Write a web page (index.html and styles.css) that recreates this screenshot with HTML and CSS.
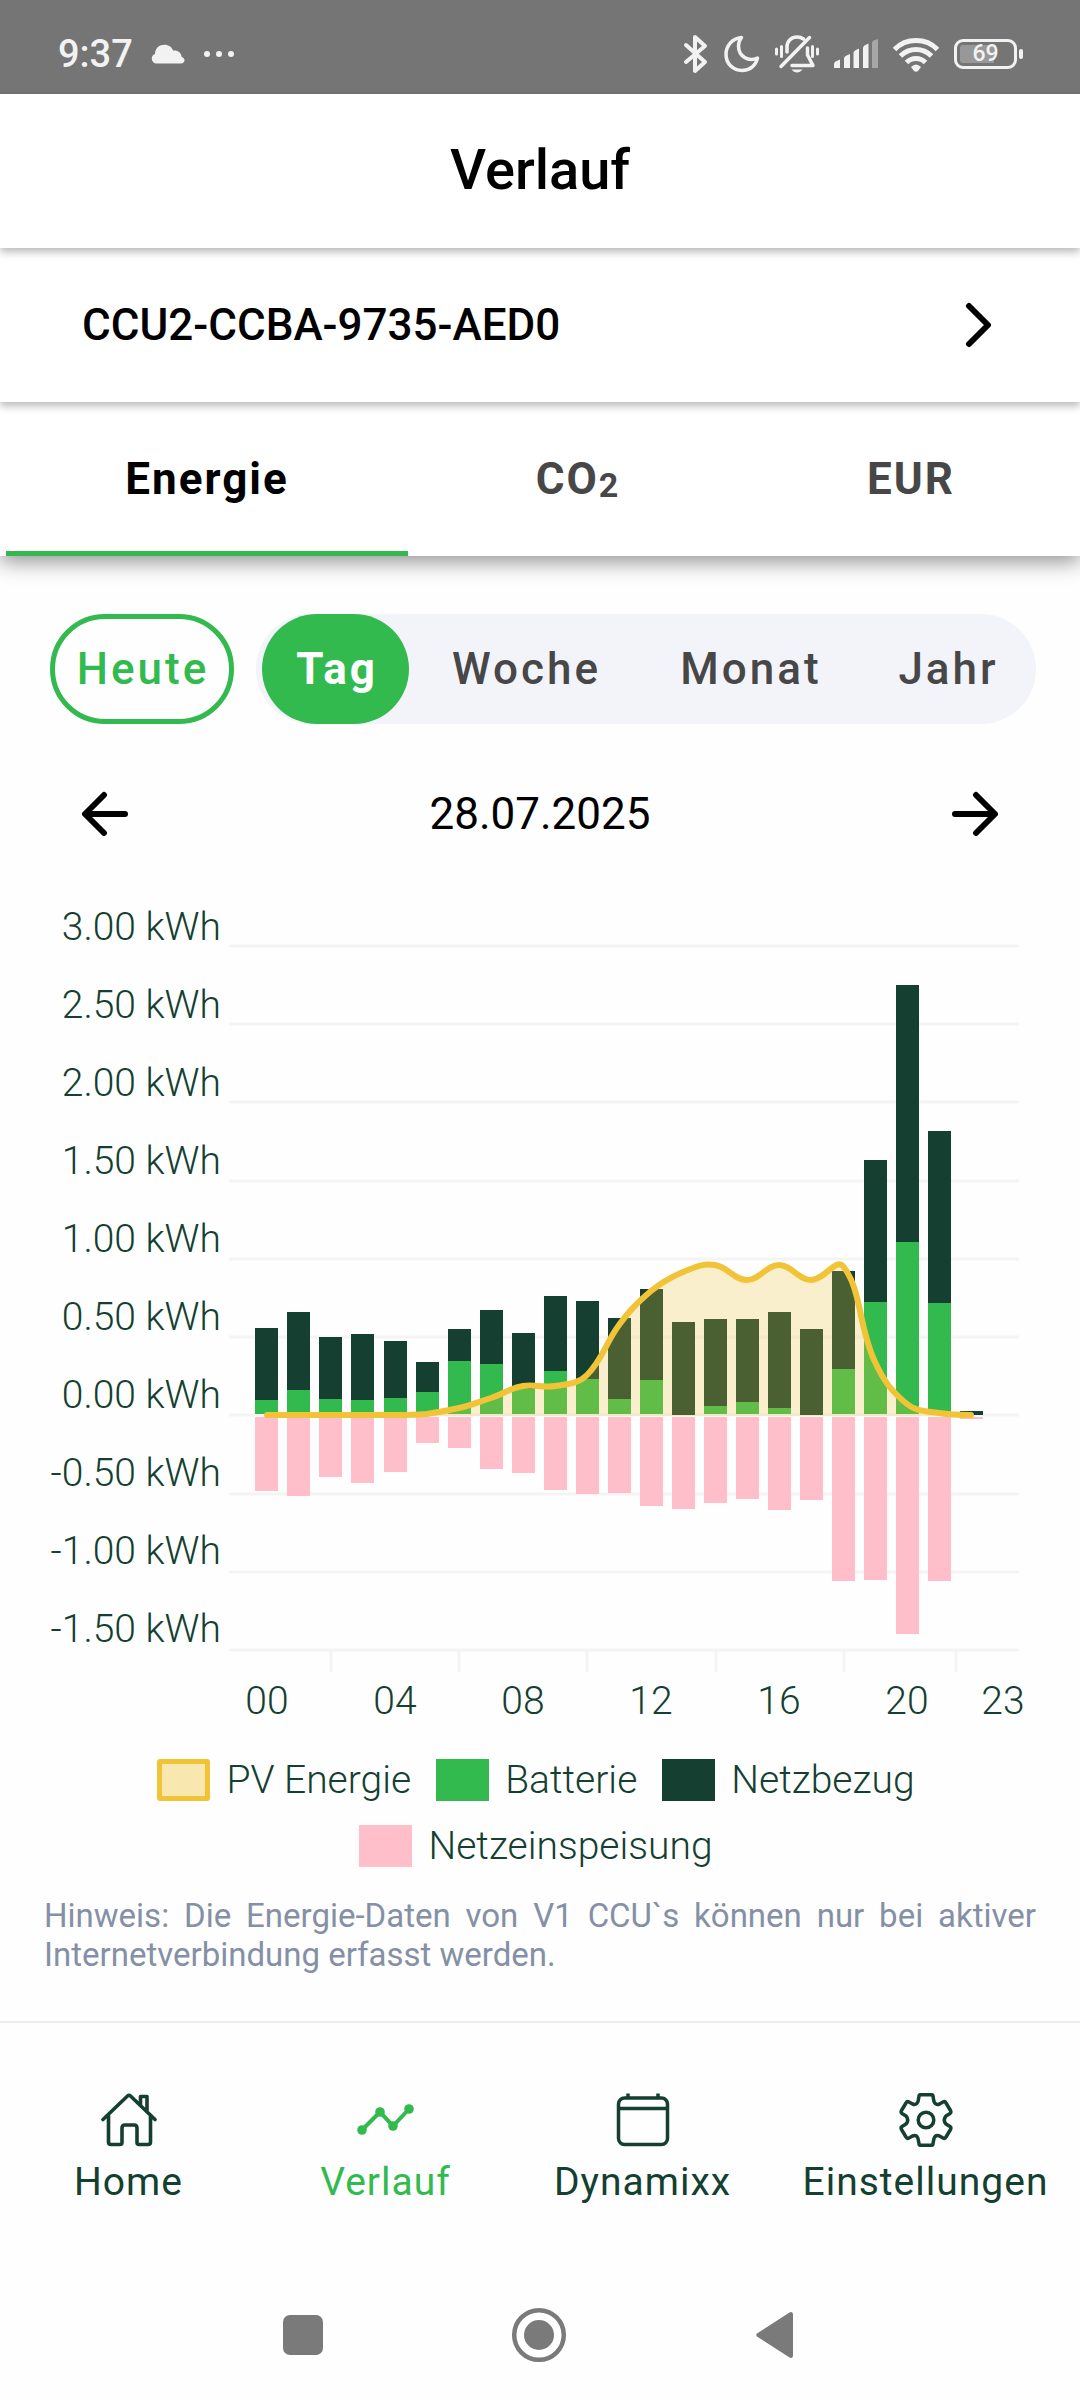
FILE: index.html
```html
<!DOCTYPE html>
<html lang="de">
<head>
<meta charset="utf-8">
<meta name="viewport" content="width=device-width, initial-scale=1">
<title>Verlauf</title>
<link rel="stylesheet" href="styles.css">
</head>
<body>
<div class="status">
  <div class="status-left">
    <span class="clock">9:37</span>
    <svg class="cloud" width="34" height="20" viewBox="0 0 34 20" fill="currentColor"><path d="M5 19.500a5 5 0 0 1-1-9.600C4 4 8.500.800 13.500.800c4 0 7.200 2.200 8.500 5.700 5-.5 8.200 2.200 8.700 6.500 1.800.5 2.800 1.800 2.800 3.300 0 1.900-1.500 3.200-3.500 3.200z"/></svg>
    <svg class="dots" width="32" height="8" viewBox="0 0 32 8" fill="currentColor"><circle cx="4" cy="4" r="3"/><circle cx="16" cy="4" r="3"/><circle cx="28" cy="4" r="3"/></svg>
  </div>
  <div class="status-right">
    <svg width="26" height="40" viewBox="0 0 26 40" fill="none" stroke="currentColor" stroke-width="4" stroke-linecap="round" stroke-linejoin="round"><path d="M3 11l19 17-10 9V3l10 9L3 28"/></svg>
    <svg width="36" height="38" viewBox="0 0 36 38" fill="none" stroke="currentColor" stroke-width="3.500" stroke-linejoin="round"><path d="M17.500 2.500C8 3.500 2 11 2 19.500 2 29 9.500 35.500 18 35.500c7.500 0 14-5 15.500-12.500-9 4-19-1.500-19-12 0-3.500 1-6 3-8.500z"/></svg>
    <svg width="44" height="38" viewBox="0 0 44 38" fill="none" stroke="currentColor" stroke-width="3.500" stroke-linecap="round" stroke-linejoin="round"><path d="M12 17v-5C12 6 16.500 2 22 2c2.500 0 4.500.500 6.500 2M32.500 13v7l5.500 10.500H17M34.500 2.500L6 31.500"/><path stroke-width="3" d="M1.500 14v5M6.500 11.500v10M37.500 11.500v10M42.500 14v5"/><path d="M16.500 34.500h11c-1.500 2-3.500 3-5.500 3s-4-1-5.500-3z" fill="currentColor" stroke="none"/></svg>
    <svg width="44" height="30" viewBox="0 0 44 30" fill="currentColor"><path d="M0 25q0-1.500 1.500-2.500L6 20.500V29H0zM10 19.500q0-1.500 1.500-2.500L16 15v14h-6zM19.500 14q0-1.500 1.500-2.500l4-2V29h-5.500zM29 9q0-1.500 1.500-2.500L34.500 4.500V29H29z"/><path opacity=".4" d="M38 4q0-1.500 1.500-2.500L44 0v29h-6z"/></svg>
    <svg width="46" height="35" viewBox="0 0 46 35" fill="none" stroke="currentColor" stroke-width="5"><path d="M1.500 12.500Q10 3.500 23 3.500t21.500 9M7.500 19Q14 12.500 23 12.500T38.500 19M13.500 25.500q4-4 9.500-4t9.500 4"/><path fill="currentColor" stroke="none" d="M18 30q5-5 10 0l-3 4q-2 1.500-4 0z"/></svg>
    <span class="battery"><span class="battery-level">69</span></span>
  </div>
</div>

<header class="title-bar"><h1>Verlauf</h1></header>

<button class="device" type="button">
  <span>CCU2-CCBA-9735-AED0</span>
  <svg width="28" height="46" viewBox="0 0 28 46" fill="none" stroke="currentColor" stroke-width="6" stroke-linecap="round" stroke-linejoin="round"><path d="M5 4l19 19L5 42"/></svg>
</button>

<nav class="unit-tabs">
  <button class="unit-tab active" type="button">Energie</button>
  <button class="unit-tab" type="button">CO<span class="sub">2</span></button>
  <button class="unit-tab" type="button">EUR</button>
</nav>

<main class="content">
  <div class="range">
    <button class="today" type="button">Heute</button>
    <div class="range-group">
      <button class="range-item active" type="button">Tag</button>
      <button class="range-item" type="button">Woche</button>
      <button class="range-item" type="button">Monat</button>
      <button class="range-item" type="button">Jahr</button>
    </div>
  </div>

  <div class="date-row">
    <button class="arrow" type="button" aria-label="Vorheriger Tag"><svg width="46" height="46" viewBox="0 0 46 46" fill="none" stroke="currentColor" stroke-width="6" stroke-linecap="round" stroke-linejoin="round"><path d="M22 4L3 23l19 19M4 23h39"/></svg></button>
    <span class="date">28.07.2025</span>
    <button class="arrow" type="button" aria-label="Nächster Tag"><svg width="46" height="46" viewBox="0 0 46 46" fill="none" stroke="currentColor" stroke-width="6" stroke-linecap="round" stroke-linejoin="round"><path d="M24 4l19 19-19 19M42 23H3"/></svg></button>
  </div>

  <!-- y = 0 is the 0 kWh line, 0.5 kWh is 78 units -->
  <svg class="chart" viewBox="0 -515 1080 830" role="img" aria-label="Energie pro Stunde">
    <path class="grid" d="M229-469h790M229-391h790M229-313h790M229-234h790M229-156h790M229-78h790M229 0h790M229 79h790M229 157h790M229 235h790M331 235v22M459 235v22M587 235v22M716 235v22M844 235v22M956 235v22"/>
    <g class="axis-y">
      <text x="221" y="-475">3.00 kWh</text><text x="221" y="-397">2.50 kWh</text><text x="221" y="-319">2.00 kWh</text><text x="221" y="-241">1.50 kWh</text><text x="221" y="-163">1.00 kWh</text><text x="221" y="-85">0.50 kWh</text><text x="221" y="-7">0.00 kWh</text><text x="221" y="71">-0.50 kWh</text><text x="221" y="149">-1.00 kWh</text><text x="221" y="227">-1.50 kWh</text>
    </g>
    <g class="axis-x">
      <text x="267" y="299">00</text><text x="395" y="299">04</text><text x="523" y="299">08</text><text x="651" y="299">12</text><text x="779" y="299">16</text><text x="907" y="299">20</text><text x="1003" y="299">23</text>
    </g>
    <path class="grid-draw" d="M255-87h23V-1h-23zM287-103h23V-1h-23zM319-78h23V-1h-23zM351-81h23V-1h-23zM384-74h23V-1h-23zM416-53h23V-1h-23zM448-86h23V-1h-23zM480-105h23V-1h-23zM512-82h23V-1h-23zM544-119h23V-1h-23zM576-114h23V-1h-23zM608-97h23V-1h-23zM640-126h23V-1h-23zM672-93h23V0h-23zM704-96h23V-1h-23zM736-96h23V-1h-23zM768-103h23V-1h-23zM800-86h23V0h-23zM832-144h23V-1h-23zM864-255h23V-1h-23zM896-430h23V-1h-23zM928-284h23V-1h-23zM960-4h23V0h-23z"/>
    <path class="battery-draw" d="M255-15h23V-1h-23zM287-25h23V-1h-23zM319-16h23V-1h-23zM351-15h23V-1h-23zM384-17h23V-1h-23zM416-23h23V-1h-23zM448-54h23V-1h-23zM480-51h23V-1h-23zM512-26h23V-1h-23zM544-44h23V-1h-23zM576-36h23V-1h-23zM608-16h23V-1h-23zM640-35h23V-1h-23zM704-9h23V-1h-23zM736-13h23V-1h-23zM768-7h23V-1h-23zM832-46h23V-1h-23zM864-113h23V-1h-23zM896-173h23V-1h-23zM928-112h23V-1h-23z"/>
    <path class="grid-feed" d="M255 2h23V76h-23zM287 2h23V81h-23zM319 2h23V62h-23zM351 2h23V68h-23zM384 2h23V57h-23zM416 2h23V28h-23zM448 2h23V33h-23zM480 2h23V54h-23zM512 2h23V58h-23zM544 2h23V75h-23zM576 2h23V79h-23zM608 2h23V78h-23zM640 2h23V91h-23zM672 2h23V94h-23zM704 2h23V88h-23zM736 2h23V84h-23zM768 2h23V95h-23zM800 2h23V85h-23zM832 2h23V166h-23zM864 2h23V165h-23zM896 2h23V219h-23zM928 2h23V166h-23zM960 2h23V4h-23z"/>
    <path class="pv-area" d="M267 0L395 0C408 0 414 0 427-1C440-3 446-4 459-7C472-10 478-13 491-17C504-21 510-27 523-29C535-31 542-27 555-29C568-31 578-31 587-40C603-56 605-71 619-90C630-105 637-112 651-124C662-133 669-137 683-143C695-148 703-152 715-150C728-148 734-135 747-135C760-135 766-150 779-150C792-150 798-135 811-135C824-135 836-157 843-149C862-125 858-89 875-53C884-34 891-24 907-11C917-3 926-4 939-2C952 0 958 0 971 0V1H267z"/>
    <path class="pv-line" d="M267 0L395 0C408 0 414 0 427-1C440-3 446-4 459-7C472-10 478-13 491-17C504-21 510-27 523-29C535-31 542-27 555-29C568-31 578-31 587-40C603-56 605-71 619-90C630-105 637-112 651-124C662-133 669-137 683-143C695-148 703-152 715-150C728-148 734-135 747-135C760-135 766-150 779-150C792-150 798-135 811-135C824-135 836-157 843-149C862-125 858-89 875-53C884-34 891-24 907-11C917-3 926-4 939-2C952 0 958 0 971 0"/>
  </svg>

  <ul class="legend">
    <li><span class="swatch pv"></span>PV Energie</li>
    <li><span class="swatch battery-use"></span>Batterie</li>
    <li><span class="swatch grid-use"></span>Netzbezug</li>
    <li><span class="swatch feed"></span>Netzeinspeisung</li>
  </ul>

  <p class="hint">Hinweis: Die Energie-Daten von V1 CCU`s können nur bei aktiver Internetverbindung erfasst werden.</p>
</main>

<nav class="app-nav">
  <a class="nav-item" href="#home">
    <svg width="56" height="54" viewBox="0 0 56 54" fill="none" stroke="currentColor" stroke-width="3.600" stroke-linecap="round" stroke-linejoin="round"><path d="M2 26.500L26.500 3q1.500-1.500 3 0L54 26.500M7.500 22v27q0 2.500 2.500 2.500h9q2 0 2-2V35q0-3 3-3h9q3 0 3 3v14.500q0 2 2 2h9q2.500 0 2.500-2.500V22M39.500 12V3.500H46V18"/></svg>
    <span>Home</span>
  </a>
  <a class="nav-item active" href="#verlauf" aria-current="page">
    <svg width="57" height="54" viewBox="0 0 57 54" fill="currentColor"><path d="M5 37L23 19l13 14 16-17" fill="none" stroke="currentColor" stroke-width="4"/><circle cx="5" cy="37" r="4.800"/><circle cx="23" cy="19" r="4.800"/><circle cx="36" cy="33" r="4.800"/><circle cx="52" cy="16" r="4.800"/></svg>
    <span>Verlauf</span>
  </a>
  <a class="nav-item" href="#dynamixx">
    <svg width="54" height="54" viewBox="0 0 54 54" fill="none" stroke="currentColor" stroke-width="3.500"><rect x="2.500" y="5" width="49" height="46.500" rx="6"/><path d="M2.500 15.500h49M12 .500V5M42 .500V5"/></svg>
    <span>Dynamixx</span>
  </a>
  <a class="nav-item" href="#einstellungen">
    <svg width="54" height="54" viewBox="-27 -27 54 54" fill="none" stroke="currentColor" stroke-width="3.500" stroke-linejoin="round"><path d="M-5-25.300H5Q7-25.300 7-23.500L8-18.500Q9.500-14.500 13.500-16L17-18Q19-19 20-17L24.500-9.500Q25.500-7.500 24-6.500L20-4Q16.500 0 20 4L24 6.500Q25.500 7.500 24.500 9.500L20 17Q19 19 17 18L13.500 16Q9.500 14.500 8 18.500L7 23.500Q7 25.300 5 25.300H-5Q-7 25.300-7 23.500L-8 18.500Q-9.500 14.500-13.500 16L-17 18Q-19 19-20 17L-24.500 9.500Q-25.500 7.500-24 6.500L-20 4Q-16.500 0-20-4L-24-6.500Q-25.500-7.500-24.500-9.500L-20-17Q-19-19-17-18L-13.500-16Q-9.500-14.500-8-18.500L-7-23.500Q-7-25.300-5-25.300z"/><circle r="7.800"/></svg>
    <span>Einstellungen</span>
  </a>
</nav>

<div class="system-nav">
  <button type="button" aria-label="Übersicht"><svg width="40" height="40" viewBox="0 0 40 40" fill="currentColor"><rect width="40" height="40" rx="7"/></svg></button>
  <button type="button" aria-label="Startbildschirm"><svg width="56" height="56" viewBox="0 0 56 56" fill="currentColor"><circle cx="28" cy="28" r="24.800" fill="none" stroke="currentColor" stroke-width="4.500"/><circle cx="28" cy="28" r="15"/></svg></button>
  <button type="button" aria-label="Zurück"><svg width="38" height="46" viewBox="0 0 38 46" fill="currentColor"><path d="M1 21.500L33.500.500Q37-1 37 3v40q0 4-3.500 2.500L1 24.500q-1.500-1.500 0-3z"/></svg></button>
</div>
</body>
</html>
```
FILE: styles.css
```css
:root {
  --green: #32ba4e;
  --forest: #143f31;
  --grey-text: #474747;
  --yellow: #f1c336;
  --pink: #febfcb;
}

* { box-sizing: border-box; }

body {
  margin: 0;
  min-height: 100vh;
  display: flex;
  flex-direction: column;
  background: #fefefe;
  color: #000;
  font-family: Roboto, "Liberation Sans", sans-serif;
}

button {
  margin: 0;
  padding: 0;
  border: 0;
  background: none;
  color: inherit;
  font: inherit;
}

svg { display: block; }

/* Phone status bar */
.status {
  display: flex;
  justify-content: space-between;
  align-items: center;
  height: 94px;
  padding: 14px 63px 0 58px;
  background: #757575;
  color: #f2f2f2;
}

.status-left,
.status-right { display: flex; align-items: center; }

.status-left { gap: 18px; }
.status-right { gap: 15px; }

.clock { font-size: 38px; line-height: 44px; font-weight: 500; }

.battery {
  position: relative;
  width: 63px;
  height: 30px;
  padding: 3px;
  border: 3px solid currentColor;
  border-radius: 9px;
}

.battery::after {
  content: "";
  position: absolute;
  top: 7px;
  right: -9px;
  width: 4px;
  height: 10px;
  border-radius: 2px;
  background: currentColor;
}

.battery-level {
  display: block;
  border-radius: 3px;
  background: linear-gradient(to right, #989898 67%, transparent 67%);
  font-size: 23px;
  line-height: 18px;
  font-weight: 500;
  text-align: center;
}

/* Stacked header bars, each casting a shadow on the next */
.title-bar,
.device,
.unit-tabs {
  position: relative;
  height: 154px;
  background: #fff;
  box-shadow: 0 4px 8px rgba(0, 0, 0, 0.28);
}

.title-bar {
  z-index: 3;
  display: flex;
  align-items: center;
  justify-content: center;
  padding-bottom: 2px;
}

h1 { margin: 0; font-size: 56px; line-height: 64px; font-weight: 500; }

.device {
  z-index: 2;
  display: flex;
  align-items: center;
  justify-content: space-between;
  padding: 0 88px 0 82px;
  font-size: 44px;
  font-weight: 500;
}

.unit-tabs {
  z-index: 1;
  display: grid;
  grid-template-columns: 402fr 340fr 326fr;
  padding: 0 6px;
  box-shadow: 0 6px 20px rgba(0, 0, 0, 0.42);
}

.unit-tab {
  padding-top: 4px;
  border-bottom: 5px solid transparent;
  color: var(--grey-text);
  font-size: 44px;
  font-weight: 700;
  letter-spacing: 2px;
}

.unit-tab.active { border-color: var(--green); color: #000; }

.sub { font-size: 34px; vertical-align: -3px; }

/* Content */
.content { padding-top: 58px; }

.range { display: flex; gap: 22px; padding: 0 44px 0 50px; }

/* The left padding balances the tracking after the last letter */
.today,
.range-item {
  height: 110px;
  padding-left: 3px;
  border-radius: 55px;
  font-size: 44px;
  font-weight: 500;
  letter-spacing: 3px;
}

.today {
  width: 184px;
  border: 5px solid var(--green);
  padding-left: 2px;
  color: var(--green);
}

.range-group {
  flex: 1;
  display: grid;
  grid-template-columns: 147fr 232fr 217fr 178fr;
  padding-left: 6px;
  border-radius: 55px;
  background: #f3f4f9;
}

.range-item { color: var(--grey-text); }

.range-item.active { background: var(--green); color: #fff; font-weight: 700; }

.date-row {
  display: flex;
  align-items: center;
  justify-content: space-between;
  padding: 64px 82px 60px;
}

.date { font-size: 44px; line-height: 52px; }

.chart { width: 100%; height: auto; }

.grid { fill: none; stroke: #f4f4f4; stroke-width: 3; }
.axis-y,
.axis-x { fill: var(--forest); font-size: 39px; font-weight: 300; }
.axis-y { text-anchor: end; }
.axis-x { text-anchor: middle; }
.grid-draw { fill: var(--forest); }
.battery-draw { fill: var(--green); }
.grid-feed { fill: var(--pink); }
.pv-area { fill: var(--yellow); fill-opacity: 0.25; }
.pv-line { fill: none; stroke: var(--yellow); stroke-width: 6; stroke-linecap: round; }

.legend {
  display: flex;
  flex-wrap: wrap;
  justify-content: center;
  gap: 20px 25px;
  margin: 0;
  padding: 27px 132px 0 124px;
  list-style: none;
  color: var(--forest);
  font-size: 39px;
  line-height: 46px;
  font-weight: 300;
}

.legend li { display: flex; align-items: center; gap: 16px; }

.swatch { width: 53px; height: 42px; }
.swatch.pv { border: 5px solid var(--yellow); border-radius: 3px; background: #f9e7b0; }
.swatch.battery-use { background: var(--green); }
.swatch.grid-use { background: var(--forest); }
.swatch.feed { background: var(--pink); }

.hint {
  margin: 0;
  padding: 27px 44px 47px;
  color: #8590a6;
  font-size: 33px;
  line-height: 39px;
  text-align: justify;
}

/* Bottom navigation */
.app-nav {
  display: grid;
  grid-template-columns: 257fr 257fr 257fr 309fr;
  padding-top: 70px;
  border-top: 2px solid #ececec;
}

.nav-item {
  display: flex;
  flex-direction: column;
  align-items: center;
  gap: 11px;
  color: var(--forest);
  font-size: 39px;
  line-height: 48px;
  letter-spacing: 1px;
  text-decoration: none;
}

.nav-item.active { color: var(--green); }

.system-nav {
  display: grid;
  grid-template-columns: repeat(3, 1fr);
  margin-top: auto;
  padding: 0 187px 37px 185px;
  color: #7a7a7a;
}

.system-nav button { display: flex; align-items: center; justify-content: center; height: 56px; }
```
